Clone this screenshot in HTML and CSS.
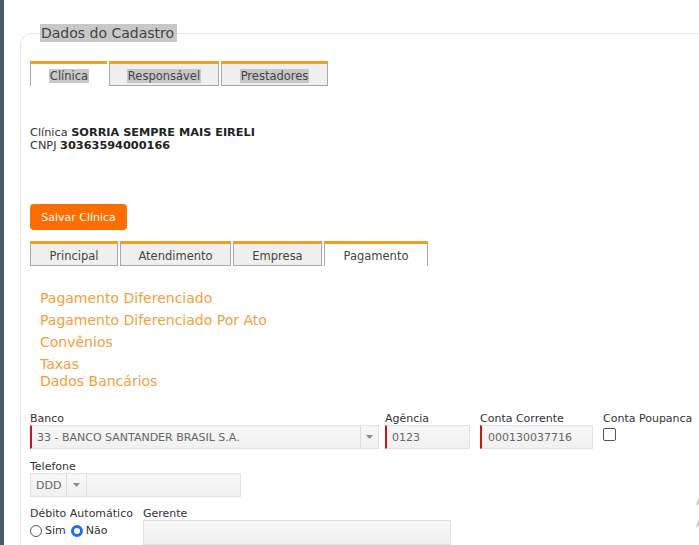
FILE: index.html
```html
<!DOCTYPE html>
<html lang="pt">
<head>
<meta charset="utf-8">
<link rel="stylesheet" href="styles.css">
</head>
<body>
<div class="strip"></div>
<div class="page">
  <fieldset class="cad">
    <legend class="cad-legend">Dados do Cadastro</legend>
    <div class="tabs top-tabs">
      <div class="tab active w77"><span class="hl">Clínica</span></div>
      <div class="tab w110"><span class="hl">Responsável</span></div>
      <div class="tab w107"><span class="hl">Prestadores</span></div>
    </div>
    <div class="info">
      <div>Clínica <b>SORRIA SEMPRE MAIS EIRELI</b></div>
      <div>CNPJ <b>30363594000166</b></div>
    </div>
    <button class="btn-save">Salvar Clínica</button>
    <div class="tabs sub-tabs">
      <div class="tab w88">Principal</div>
      <div class="tab w111">Atendimento</div>
      <div class="tab w89">Empresa</div>
      <div class="tab active w104">Pagamento</div>
    </div>
    <div class="links">
      <a class="lnk">Pagamento Diferenciado</a>
      <a class="lnk">Pagamento Diferenciado Por Ato</a>
      <a class="lnk">Convênios</a>
      <a class="lnk tight first">Taxas</a>
      <a class="lnk tight">Dados Bancários</a>
    </div>
    <div class="row row1">
      <div class="field f-banco">
        <label>Banco</label>
        <div class="select req">
          <span class="val">33 - BANCO SANTANDER BRASIL S.A.</span>
          <span class="arrow"><svg width="7" height="4" viewBox="0 0 7 4"><path d="M0 0h7L3.5 4z" fill="#8a8a8a"/></svg></span>
        </div>
      </div>
      <div class="field f-ag">
        <label>Agência</label>
        <div class="input req">0123</div>
      </div>
      <div class="field f-cc">
        <label>Conta Corrente</label>
        <div class="input req">000130037716</div>
      </div>
      <div class="field f-cp">
        <label>Conta Poupanca</label>
        <span class="check"></span>
      </div>
    </div>
    <div class="row row2">
      <div class="field">
        <label>Telefone</label>
        <div class="phone">
          <div class="ddd"><span class="val">DDD</span><span class="arrow"><svg width="7" height="4" viewBox="0 0 7 4"><path d="M0 0h7L3.5 4z" fill="#8a8a8a"/></svg></span></div>
          <div class="tel"></div>
        </div>
      </div>
    </div>
    <div class="row row3">
      <div class="field f-deb">
        <label>Débito Automático</label>
        <div class="radios">
          <span class="radio"></span><span class="rlabel">Sim</span>
          <span class="radio on"></span><span class="rlabel">Não</span>
        </div>
      </div>
      <div class="field f-ger">
        <label>Gerente</label>
        <div class="input wide"></div>
      </div>
    </div>
  </fieldset>
  <div class="edge-text"><span>A</span><span>A</span></div>
</div>
</body>
</html>
```

FILE: styles.css
```css
html, body {
  margin: 0;
  padding: 0;
  background: #fff;
  overflow: hidden;
  width: 699px;
  height: 545px;
}
body {
  font-family: "DejaVu Sans", Verdana, sans-serif;
  font-size: 11px;
  color: #333;
  display: flex;
}
.strip {
  width: 4px;
  flex: none;
  background: #4d5a68;
  height: 545px;
}
.page {
  position: relative;
  flex: 1;
  padding: 24px 0 0 16px;
}
.cad {
  margin: 0;
  width: 760px;
  border: 1px solid #e6e6e6;
  border-right: none;
  border-radius: 12px 0 0 0;
  padding: 0 0 0 9px;
  min-inline-size: 0;
}
.cad-legend {
  margin-left: 10px;
  font-size: 14px;
  line-height: 18px;
  color: #444;
  background: #c8c8c8;
  padding: 0 3px 0 1px;
}
.tabs {
  display: flex;
  gap: 2px;
}
.top-tabs { margin-top: 19px; }
.tab {
  box-sizing: border-box;
  height: 25px;
  border: 1px solid #a9a9a9;
  border-top: 3px solid #f0a021;
  background: #efefef;
  display: flex;
  align-items: center;
  justify-content: center;
  font-size: 11.5px;
  color: #444;
  padding-top: 2px;
}
.tab.active {
  background: #fff;
  border-bottom: none;
}
.top-tabs .tab.active { border-right: none; }
.hl { background: #c8c8c8; padding: 0 1px; }
.w77 { width: 77px; }
.w110 { width: 110px; }
.w107 { width: 107px; }
.w88 { width: 88px; }
.w111 { width: 111px; }
.w89 { width: 89px; }
.w104 { width: 104px; }
.info {
  margin-top: 40px;
  line-height: 13px;
  font-size: 11.3px;
  color: #333;
}
.info b { color: #222; }
.btn-save {
  display: block;
  margin-top: 52px;
  width: 97px;
  height: 26px;
  border: none;
  border-radius: 4px;
  background: #ff6c00;
  color: #fff;
  font-family: inherit;
  font-size: 11px;
  padding: 0;
}
.sub-tabs { margin-top: 11px; }
.links {
  display: flex;
  flex-direction: column;
  padding-left: 10px;
  margin-top: 21px;
}
.lnk {
  font-size: 14px;
  line-height: 22px;
  color: #f2a03c;
}
.lnk.tight { line-height: 17px; }
.lnk.first { margin-top: 3px; }
.row {
  display: flex;
}
.row1 { margin-top: 22px; }
.row2 { margin-top: 11px; }
.row3 { margin-top: 10px; }
.field {
  display: flex;
  flex-direction: column;
}
.field label {
  font-size: 11px;
  line-height: 13px;
  color: #333;
}
.select, .input, .ddd, .tel {
  box-sizing: border-box;
  height: 24px;
  border: 1px solid #e2e2e2;
  background: linear-gradient(#f8f8f8, #f0f0f0);
  display: flex;
  align-items: center;
  color: #666;
  font-size: 11px;
}
.req { border-left: 2px solid #c8161d; }
.f-banco .select { width: 349px; }
.select .val { flex: 1; padding-left: 5px; }
.arrow {
  width: 17px;
  height: 22px;
  border-left: 1px solid #ddd;
  display: flex;
  align-items: center;
  justify-content: center;
}
.f-ag { margin-left: 6px; }
.f-ag .input { width: 85px; padding-left: 5px; }
.f-cc { margin-left: 10px; }
.f-cc .input { width: 113px; padding-left: 6px; }
.f-cp { margin-left: 10px; }
.check {
  width: 11px;
  height: 11px;
  border: 1px solid #555;
  border-radius: 2px;
  margin-top: 3px;
  background: #fff;
}
.phone { display: flex; }
.ddd { width: 57px; }
.ddd .val { flex: 1; padding-left: 5px; }
.ddd .arrow { width: 19px; }
.tel { width: 154px; border-left: none; }
.radios {
  display: flex;
  align-items: center;
  margin-top: 4px;
}
.radio {
  box-sizing: border-box;
  width: 12px;
  height: 12px;
  border: 1px solid #555;
  border-radius: 50%;
  background: #fff;
  margin-right: 3px;
}
.radio.on {
  border: 3px solid #1a73e8;
  background: #fff;
  margin-left: 5px;
}
.rlabel { font-size: 11px; color: #333; }
.f-ger { margin-left: 10px; }
.f-ger .input { width: 308px; height: 25px; }
.edge-text {
  position: absolute;
  left: 692px;
  top: 490px;
  display: flex;
  flex-direction: column;
  color: #bbb;
  font-size: 13px;
  line-height: 22px;
}
```
